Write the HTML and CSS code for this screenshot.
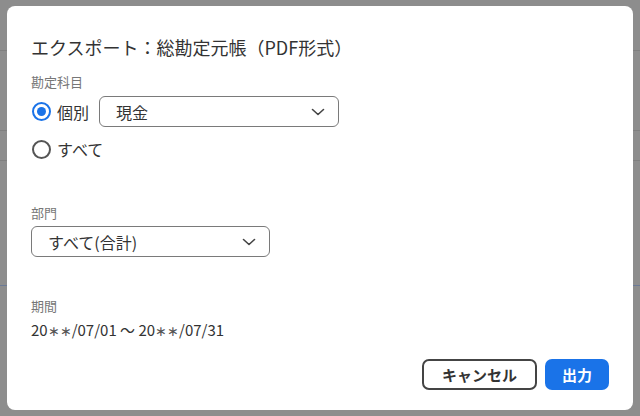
FILE: index.html
```html
<!DOCTYPE html>
<html lang="ja">
<head>
<meta charset="utf-8">
<link rel="stylesheet" href="styles.css">
</head>
<body>
<div class="backdrop">
  <div class="dialog">
    <h1 class="title">エクスポート：総勘定元帳（PDF形式）</h1>
    <div class="label first">勘定科目</div>
    <div class="radio-row">
      <span class="radio checked"></span>
      <span class="radio-text">個別</span>
      <div class="select account">
        <span>現金</span>
        <svg class="chev" width="14" height="8" viewBox="0 0 14 8"><path d="M1.5 1.5 L7 6.5 L12.5 1.5" fill="none" stroke="#444" stroke-width="1.6" stroke-linecap="round" stroke-linejoin="round"/></svg>
      </div>
    </div>
    <div class="radio-row second">
      <span class="radio"></span>
      <span class="radio-text">すべて</span>
    </div>
    <div class="label dept">部門</div>
    <div class="select deptsel">
      <span>すべて(合計)</span>
      <svg class="chev" width="14" height="8" viewBox="0 0 14 8"><path d="M1.5 1.5 L7 6.5 L12.5 1.5" fill="none" stroke="#444" stroke-width="1.6" stroke-linecap="round" stroke-linejoin="round"/></svg>
    </div>
    <div class="label period">期間</div>
    <div class="date">20<span class="ast">∗∗</span>/07/01 〜 20<span class="ast">∗∗</span>/07/31</div>
    <div class="actions">
      <button class="btn cancel">キャンセル</button>
      <button class="btn primary">出力</button>
    </div>
  </div>
</div>
</body>
</html>
```
FILE: styles.css
```css
html, body {
  margin: 0;
  padding: 0;
}
body {
  width: 640px;
  height: 416px;
  overflow: hidden;
  font-family: "Noto Sans CJK JP", "Noto Sans", sans-serif;
  color: #333;
}
.backdrop {
  width: 640px;
  height: 416px;
  background-color: #8d8d8d;
  background-image:
    linear-gradient(#7f7f7f, #7f7f7f),
    linear-gradient(#7f7f7f, #7f7f7f),
    linear-gradient(#7f7f7f, #7f7f7f),
    linear-gradient(#6b7a96, #6b7a96);
  background-size: 640px 1px, 640px 1px, 640px 1px, 640px 1px;
  background-position: 0 50px, 0 130px, 0 160px, 0 285px;
  background-repeat: no-repeat;
  padding: 6px 7px;
  box-sizing: border-box;
}
.dialog {
  width: 626px;
  height: 404px;
  background: #fff;
  border-radius: 8px;
  box-sizing: border-box;
  padding: 28px 24px 0 24px;
  display: flex;
  flex-direction: column;
}
.title {
  margin: 0;
  font-size: 18px;
  font-weight: 400;
  line-height: 26px;
  color: #333;
}
.label {
  font-size: 13px;
  line-height: 18px;
  color: #777;
}
.label.first { margin-top: 13px; }
.label.dept { margin-top: 43px; }
.label.period { margin-top: 40px; }
.radio-row {
  display: flex;
  align-items: center;
  margin-top: 5px;
  height: 31px;
}
.radio-row.second {
  margin-top: 10px;
  height: 24px;
}
.radio {
  width: 19px;
  height: 19px;
  box-sizing: border-box;
  border: 2px solid #555;
  border-radius: 50%;
  margin-left: 1px;
  position: relative;
  flex: none;
}
.radio.checked {
  border-color: #1a73e8;
}
.radio.checked::after {
  content: "";
  position: absolute;
  left: 3px;
  top: 3px;
  width: 9px;
  height: 9px;
  border-radius: 50%;
  background: #1a73e8;
}
.radio-text {
  font-size: 16px;
  margin-left: 6px;
  line-height: 24px;
}
.select {
  box-sizing: border-box;
  height: 31px;
  border: 1px solid #7a7a7a;
  border-radius: 6px;
  display: flex;
  align-items: center;
  justify-content: space-between;
  font-size: 16px;
  color: #333;
}
.select.account {
  width: 240px;
  margin-left: 10px;
  padding: 0 13px 0 16px;
}
.select.deptsel {
  width: 239px;
  margin-top: 4px;
  padding: 0 13px 0 16px;
}
.date {
  margin-top: 4px;
  font-size: 15px;
  line-height: 22px;
  color: #333;
}
.ast {
  font-size: 14px;
  color: #555;
}
.actions {
  margin-top: 18px;
  display: flex;
  justify-content: flex-end;
  gap: 8px;
}
.btn {
  font-family: "Noto Sans CJK JP", "Noto Sans", sans-serif;
  font-size: 15px;
  font-weight: 700;
  height: 31px;
  border-radius: 7px;
  box-sizing: border-box;
  padding: 0;
  cursor: pointer;
}
.btn.cancel {
  width: 115px;
  background: #fff;
  border: 2px solid #444;
  color: #333;
}
.btn.primary {
  width: 64px;
  background: #1a73e8;
  border: none;
  color: #fff;
}
```
